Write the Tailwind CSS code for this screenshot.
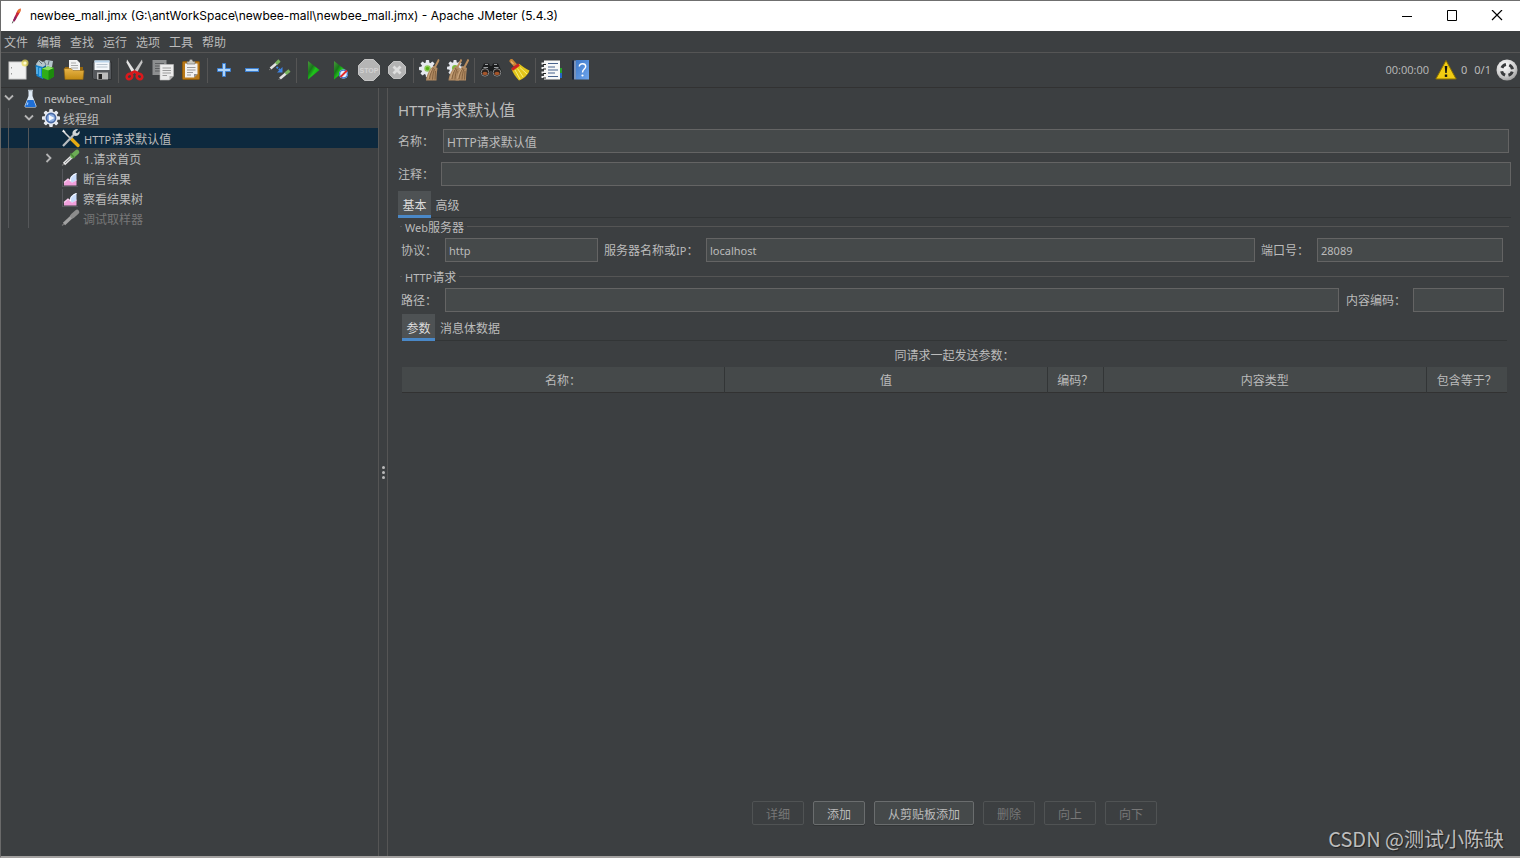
<!DOCTYPE html>
<html lang="zh-CN">
<head>
<meta charset="utf-8">
<title>newbee_mall.jmx - Apache JMeter (5.4.3)</title>
<script src="https://cdn.jsdelivr.net/npm/@tailwindcss/browser@4"></script>
</head>
<body class="relative flex h-screen flex-col overflow-hidden border-t border-b-2 border-l border-t-[#6f6f6f] border-b-[#a3a1a0] border-l-[#6a6a6a] bg-[#3c3f41] font-['Noto_Sans','Noto_Sans_CJK_SC',sans-serif] text-xs text-[#bbbbbb]">

<svg class="absolute size-0" aria-hidden="true">
  <defs>
    <linearGradient id="play" x1="0" y1="0" x2="1" y2="1"><stop offset="0" stop-color="#4a9a3c"/><stop offset=".35" stop-color="#18761a"/><stop offset=".55" stop-color="#1fc41b"/><stop offset="1" stop-color="#0c8a0c"/></linearGradient>
    <linearGradient id="gold" x1="0" y1="0" x2="0" y2="1"><stop offset="0" stop-color="#e8b54a"/><stop offset="1" stop-color="#c28a12"/></linearGradient>
    <linearGradient id="book" x1="0" y1="0" x2="1" y2="1"><stop offset="0" stop-color="#3d78c8"/><stop offset="1" stop-color="#6fa6ee"/></linearGradient>
    <radialGradient id="ball" cx=".4" cy=".3" r=".8"><stop offset="0" stop-color="#ffffff"/><stop offset=".6" stop-color="#cfcfcf"/><stop offset="1" stop-color="#8f8f8f"/></radialGradient>
    <symbol id="gear" viewBox="0 0 20 20">
      <g fill="#e6e9ef"><rect x="8" y="0" width="4" height="20" rx="1"/><rect x="8" y="0" width="4" height="20" rx="1" transform="rotate(45 10 10)"/><rect x="8" y="0" width="4" height="20" rx="1" transform="rotate(90 10 10)"/><rect x="8" y="0" width="4" height="20" rx="1" transform="rotate(135 10 10)"/><circle cx="10" cy="10" r="7.5"/></g>
    </symbol>
    <symbol id="broom" viewBox="0 0 14 22">
      <path d="M13.500 0.500L9 9" stroke="#b98d5e" stroke-width="2"/>
      <path d="M8 7L12 9C11.300 14 11 18 11 21.500H.5C1 16 4 10 8 7Z" fill="#b08a62"/>
      <path d="M4 20C4.500 16 6 12 8 9M7 20.500C7.200 16 8 13 9 10M9.500 20.500L10 12" stroke="#71502f" stroke-width=".7" fill="none"/>
      <path d="M2.500 19.500C3.500 15 5 12 6.500 10" stroke="#d3b088" stroke-width=".8" fill="none"/>
    </symbol>
    <symbol id="chart" viewBox="0 0 20 20">
      <path d="M1.500 1V19M1 18.500H17" stroke="#55575c" fill="none"/>
      <path d="M3 14.500L7 11L11 14L15.500 12V17.500H3Z" fill="#f0a0dc"/>
      <path d="M3 14.500L7 11L11 14L15.500 12" stroke="#fbd3f2" stroke-width="1.200" fill="none"/>
      <path d="M9 13C8.500 9 11 6.500 15.500 5V12L11.500 14.500Z" fill="#c9dcfb"/>
      <path d="M9.500 13C9 9.500 11.500 7 15.500 5.500" stroke="#fff" fill="none"/>
    </symbol>
  </defs>
</svg>

<!-- Title bar -->
<header class="flex h-[30px] shrink-0 items-center bg-white text-black">
  <svg class="ml-[9px] h-4 w-3" viewBox="0 0 12 16"><path d="M10.500 0.500C8 1 6.500 4 5.500 7L3 12.500L4.500 13.500L7.500 8.500C9.500 5.500 11 3 10.500 0.500Z" fill="#c8243a"/><path d="M10.500 0.500C9 1 7.500 2.500 7 4.500L9.800 4.800C10.500 3.500 10.900 2 10.500 0.500Z" fill="#e8792a"/><path d="M5.500 7L3 12.500L4.500 13.500L6.500 10Z" fill="#8c2263"/><path d="M3.300 13L2.300 15.300" stroke="#555"/></svg>
  <h1 class="ml-2 flex-1 font-['Inter',sans-serif] text-xs whitespace-nowrap">newbee_mall.jmx (G:\antWorkSpace\newbee-mall\newbee_mall.jmx) - Apache JMeter (5.4.3)</h1>
  <button aria-label="最小化" class="flex h-full w-[45px] items-center justify-center"><svg class="h-3 w-3" viewBox="0 0 12 12"><path d="M1 6.500H11" stroke="#000"/></svg></button>
  <button aria-label="最大化" class="flex h-full w-[45px] items-center justify-center"><svg class="h-3 w-3" viewBox="0 0 12 12"><path d="M1.500 .5H10.500V10.500H1.500Z" stroke="#000" fill="none"/></svg></button>
  <button aria-label="关闭" class="flex h-full w-[46px] items-center justify-center"><svg class="h-3 w-3" viewBox="0 0 12 12"><path d="M1 0L11 10M11 0L1 10" stroke="#000" stroke-width="1.200"/></svg></button>
</header>

<!-- Menu bar -->
<nav class="flex h-[22px] shrink-0 items-center gap-[9px] border-b border-[#555555] pt-[2px] pl-[3px]" aria-label="菜单">
  <button>文件</button><button>编辑</button><button>查找</button><button>运行</button><button>选项</button><button>工具</button><button>帮助</button>
</nav>

<!-- Toolbar -->
<div role="toolbar" aria-label="工具栏" class="flex h-[35px] shrink-0 items-center border-b border-[#323232] pl-[3px] *:shrink-0">
  <button aria-label="新建" class="flex w-7 justify-center"><svg class="size-[22px]" viewBox="0 0 22 22"><rect x="2" y="3" width="17" height="17" fill="#f1f1f1" stroke="#cfcfcf"/><path d="M4.500 8V9.500M4.500 14V15.500" stroke="#999"/><circle cx="18" cy="4" r="3.500" fill="#e9dc5a" opacity=".75"/><circle cx="18" cy="4" r="1.600" fill="#fffbd0"/></svg></button>
  <button aria-label="模板" class="flex w-7 justify-center"><svg class="size-[22px]" viewBox="0 0 22 22"><path d="M1 5L4 1L8 3L11 1L18 2L17 8H2Z" fill="#b6c6cc"/><path d="M4 2L7 5M9 2L11 6M14 2L13 6" stroke="#66757c"/><path d="M.5 6L8 8V20L1.500 17Z" fill="#1583cd"/><path d="M8 8L11 6V18L8 20Z" fill="#0b5a96"/><path d="M2 8V15M5 9V17" stroke="#72c4f5" stroke-width="1.300"/><path d="M7 9.500L13 7.500L19 9V17.500L13 21L7 18.500Z" fill="#2fae18"/><path d="M7 9.500L13 7.500L19 9L13.500 11.500Z" fill="#8be05d"/><path d="M13.500 11.500L19 9V17.500L13.500 21Z" fill="#1c8a0c"/></svg></button>
  <button aria-label="打开" class="flex w-7 justify-center"><svg class="size-[22px]" viewBox="0 0 22 22"><path d="M2 8H20V20H2Z" fill="#94660d"/><path d="M6 1H14L17 4V13H6Z" fill="#f2f2f2"/><path d="M8 4H13M8 6.500H15M8 9H15" stroke="#aaa"/><path d="M1 9.500H8L10 11.500H21L20 20.500H2Z" fill="url(#gold)" stroke="#8e6310" stroke-width=".6"/></svg></button>
  <button aria-label="保存" class="flex w-7 justify-center"><svg class="size-[22px]" viewBox="0 0 22 22"><path d="M1.500 3H20.500V20.500H3L1.500 19Z" fill="#55585c" stroke="#303234"/><path d="M3.500 1.500H18.500V11H3.500Z" fill="#f5f8fb"/><path d="M3.500 1.500H18.500V3.500H3.500Z" fill="#bcd6ec"/><path d="M5.500 5.500H16.500M5.500 8H16.500" stroke="#b9c4ce"/><path d="M6 13.500H17V20.500H6Z" fill="#bcbcbc"/><path d="M7.500 15H11V20H7.500Z" fill="#222"/></svg></button>
  <div class="mx-[2px] h-[25px] w-px bg-[#555555]"></div>
  <button aria-label="剪切" class="flex w-7 justify-center"><svg class="size-[22px]" viewBox="0 0 22 22"><path d="M3 0.500L12 13.500L8.500 14.500L2.500 3.500Z" fill="#e4e4e4"/><path d="M18 0.500L9 13.500L12.500 14.500L18.500 3.500Z" fill="#c4c4c4"/><g fill="none" stroke="#d9191c" stroke-width="2.600"><ellipse cx="5.500" cy="17.500" rx="3" ry="2.500" transform="rotate(-40 5.500 17.500)"/><ellipse cx="15.500" cy="17.500" rx="3" ry="2.500" transform="rotate(40 15.500 17.500)"/><path d="M6.500 14.500L10.500 12.500L14.500 14.500"/></g></svg></button>
  <button aria-label="复制" class="flex w-7 justify-center"><svg class="size-[22px]" viewBox="0 0 22 22"><path d="M0.500 1H14.500V16H0.500Z" fill="#8d8f90"/><path d="M3 4.500H12M3 7H8M3 9.500H8M3 12H8" stroke="#5d5f61"/><path d="M8 5.500H21.500V17L17.500 21H8Z" fill="#ececec" stroke="#bdbdbd" stroke-width=".6"/><path d="M10.500 9H19M10.500 11.500H19M10.500 14H19M10.500 16.500H15" stroke="#9c9c9c"/><path d="M21.500 17H17.500V21Z" fill="#b0b0b0"/></svg></button>
  <button aria-label="粘贴" class="flex w-7 justify-center"><svg class="size-[22px]" viewBox="0 0 22 22"><rect x="2.500" y="2.500" width="17" height="18" rx="1" fill="#b87817" stroke="#8b5a0e"/><path d="M5 4.500H17.500V15L14 18.500H5Z" fill="#f1f1f1"/><path d="M7 8.500H15.500M7 11H15.500M7 13.500H13M7 16H11" stroke="#999"/><path d="M17.500 15H14V18.500Z" fill="#8e8e8e"/><path d="M7 5V2.500H9L10 0.500H12L13 2.500H15V5Z" fill="#c9c9c1" stroke="#666" stroke-width=".6"/></svg></button>
  <div class="mx-[2px] h-[25px] w-px bg-[#555555]"></div>
  <button aria-label="展开" class="flex w-7 justify-center"><svg class="size-[22px]" viewBox="0 0 22 22"><path d="M9.500 4.500H12.500V9.500H17.500V12.500H12.500V17.500H9.500V12.500H4.500V9.500H9.500Z" fill="#aed3f7" stroke="#3c7fd0"/></svg></button>
  <button aria-label="收起" class="flex w-7 justify-center"><svg class="size-[22px]" viewBox="0 0 22 22"><rect x="4.500" y="9.500" width="13" height="3" fill="#aed3f7" stroke="#3c7fd0"/></svg></button>
  <button aria-label="切换" class="flex w-7 justify-center"><svg class="size-[22px]" viewBox="0 0 22 22"><path d="M1.500 9.500L8 4" stroke="#e2e2e2" stroke-width="2.600"/><path d="M7 4.800L10.500 1.500" stroke="#78b45e" stroke-width="3.200"/><path d="M0 11L2 9.500M9.500 21L11.500 19" stroke="#777"/><path d="M11 19.500L17.500 14" stroke="#e2e2e2" stroke-width="2.600"/><path d="M16.500 14.800L20.500 11.500" stroke="#78b45e" stroke-width="3.200"/><path d="M7.500 8L11 11" stroke="#3e84e4" stroke-width="1.800" stroke-dasharray="2 1"/><path d="M13.500 8V13.500H8Z" fill="#3e84e4"/></svg></button>
  <div class="mx-[2px] h-[25px] w-px bg-[#555555]"></div>
  <button aria-label="启动" class="flex w-7 justify-center"><svg class="size-[22px]" viewBox="0 0 22 22"><path d="M6 2L17.500 11L6 20.500Z" fill="url(#play)"/></svg></button>
  <button aria-label="不停顿开始" class="flex w-7 justify-center"><svg class="size-[22px]" viewBox="0 0 22 22"><path d="M4 2L15.500 11L4 20.500Z" fill="url(#play)"/><circle cx="13.500" cy="15" r="4.500" fill="#e8eefb"/><circle cx="13.500" cy="15" r="3.900" fill="none" stroke="#3c78cf" stroke-width="1.300"/><path d="M10.500 18L17 11.500" stroke="#e22a2a" stroke-width="1.800"/></svg></button>
  <button aria-label="停止" class="flex w-7 justify-center"><svg class="size-[22px]" viewBox="0 0 22 22"><path d="M6.500 0.500H15.500L21.500 6.500V15.500L15.500 21.500H6.500L0.500 15.500V6.500Z" fill="#b5b5b5" stroke="#c4c4c4"/><text x="11" y="14" text-anchor="middle" font-family="Liberation Sans" font-weight="bold" font-size="7" fill="#d2d2d2">STOP</text></svg></button>
  <button aria-label="关闭线程" class="flex w-7 justify-center"><svg class="size-[22px]" viewBox="0 0 22 22"><path d="M7.500 2.500H14.500L19.500 7.500V14.500L14.500 19.500H7.500L2.500 14.500V7.500Z" fill="#b3b3b3" stroke="#c2c2c2"/><path d="M7.500 7.500L14.500 14.500M14.500 7.500L7.500 14.500" stroke="#dedede" stroke-width="2.800"/></svg></button>
  <div class="mx-[2px] h-[25px] w-px bg-[#555555]"></div>
  <button aria-label="清除" class="flex w-7 justify-center"><svg class="size-[22px]" viewBox="0 0 22 22"><use href="#gear" x="0" y="1" width="17" height="17"/><circle cx="8.500" cy="9.500" r="3.200" fill="#8fc95a"/><circle cx="8.500" cy="9.500" r="1.700" fill="#55b012"/><use href="#broom" x="6.500" y="0" width="14" height="22"/></svg></button>
  <button aria-label="清除全部" class="flex w-7 justify-center"><svg class="size-[22px]" viewBox="0 0 22 22"><use href="#gear" x="0" y="1" width="16" height="16"/><circle cx="8" cy="9" r="3" fill="#7cbb3d"/><use href="#broom" x="1" y="0" width="14" height="22"/><use href="#broom" x="8" y="0" width="14" height="22"/></svg></button>
  <div class="mx-[2px] h-[25px] w-px bg-[#555555]"></div>
  <button aria-label="搜索" class="flex w-7 justify-center"><svg class="size-[22px]" viewBox="0 0 22 22"><path d="M4 4.500H9L10 7H12L13 4.500H18L21.500 12C22 19 14 19 13 15L12 12H10L9 15C8 19 0 19 .5 12Z" fill="#1b1d1e"/><path d="M5 5.500H8M14 5.500H17M3.500 8.500H8M14 8.500H18.500" stroke="#9a9da0" stroke-width="1.200"/><circle cx="5" cy="13.500" r="3.800" fill="#2a211d" stroke="#85888a"/><circle cx="17" cy="13.500" r="3.800" fill="#2a211d" stroke="#85888a"/><ellipse cx="5" cy="14.500" rx="2.500" ry="1.800" fill="#a4552b"/><ellipse cx="17" cy="14.500" rx="2.500" ry="1.800" fill="#a4552b"/></svg></button>
  <button aria-label="重置搜索" class="flex w-7 justify-center"><svg class="size-[22px]" viewBox="0 0 22 22"><path d="M3.500 2L8 7" stroke="#c88434" stroke-width="4" stroke-linecap="round"/><path d="M3 2.500L5.500 5" stroke="#e6b36b" stroke-width="1.200"/><path d="M3.500 10L11.500 5C15 8 18 10 21.500 11.500C20 16 16 19.500 11 21.500C7.500 18 5 14 3.500 10Z" fill="#e2c51b"/><path d="M7 11L12 20M9.500 9.500L15 18M12 8.500L19 15" stroke="#f7ee79" fill="none"/><path d="M4 10.500L11 5.500" stroke="#cc2323" stroke-width="2.800"/></svg></button>
  <div class="mx-[2px] h-[25px] w-px bg-[#555555]"></div>
  <button aria-label="函数助手" class="flex w-7 justify-center"><svg class="size-[22px]" viewBox="0 0 22 22"><path d="M18 9H21V14H18Z" fill="#26a02a"/><path d="M18 14H21V19H18Z" fill="#2466c4"/><path d="M3 1.500H19V20.500H3Z" fill="#f7f7f7"/><path d="M7 4.500H17M7 8H14M7 11H17M7 14H14M7 17.500H17" stroke="#49628c" stroke-width="1.200"/><path d="M.5 4.500H5M.5 9H5M.5 13.500H5M.5 18H5" stroke="#f0f0f0" stroke-width="2"/><path d="M2 5.500H5M2 10H5M2 14.500H5M2 19H5" stroke="#222"/></svg></button>
  <button aria-label="帮助" class="flex w-7 justify-center"><svg class="size-[22px]" viewBox="0 0 22 22"><path d="M3 1.500H6V20.500H3Z" fill="#17243d"/><path d="M5 1.500H7V20.500H5Z" fill="#7a92b8"/><path d="M7 1H20V20.500H7Z" fill="url(#book)"/><path d="M10.300 7.500C10.300 3.800 16.700 3.800 16.700 7.500C16.700 10 13.500 10.200 13.500 13.500" fill="none" stroke="#fff" stroke-width="1.400"/><circle cx="13.500" cy="16.500" r="1.100" fill="#fff"/></svg></button>

  <div class="ml-auto flex items-center pr-[2px]">
    <span class="pt-px font-['Open_Sans','Noto_Sans_CJK_SC',sans-serif] text-[11px]">00:00:00</span>
    <button aria-label="警告" class="ml-[6px]"><svg class="size-[22px]" viewBox="0 0 22 22"><path d="M11 1.500L21.200 20H.8Z" fill="#f2cc12" stroke="#8b7000" stroke-linejoin="round"/><path d="M9.700 7H12.300L11.700 14H10.300Z" fill="#111"/><rect x="9.800" y="15.500" width="2.400" height="2.400" fill="#111"/></svg></button>
    <span class="ml-1 pt-px text-[11px]">0</span>
    <span class="ml-[7px] pt-px text-[11px]">0/1</span>
    <svg class="ml-[5px] size-[22px]" viewBox="0 0 22 22"><circle cx="11" cy="11" r="10.500" fill="url(#ball)"/><circle cx="11" cy="11" r="5.500" fill="none" stroke="#393b3d" stroke-width="3" stroke-dasharray="5.200 3.440" stroke-dashoffset="-1.720"/></svg>
  </div>
</div>

<div class="flex min-h-0 flex-1">
  <!-- Test plan tree -->
  <aside class="w-[377px] shrink-0">
    <ul role="tree" class="*:flex *:h-5 *:items-center *:whitespace-nowrap">
      <li role="treeitem" aria-expanded="true">
        <svg class="ml-[3px] h-3 w-[10px]" viewBox="0 0 10 12"><path d="M1 3.500L5 7.500L9 3.500" stroke="#b4b4b4" stroke-width="1.800" fill="none"/></svg>
        <svg class="ml-[6px] size-5" viewBox="0 0 20 20"><path d="M8.500 2.500H12.500V8L16.500 18C16.500 19.500 15.500 19.500 14.500 19.500H6.500C5.500 19.500 4.500 19.500 4.500 18L8.500 8Z" fill="#dde9f5"/><path d="M7.500 12H13.500L15.800 18C15.800 19 15.500 19 14.500 19H6.500C5.500 19 5.200 19 5.200 18Z" fill="#1f6fd6"/><path d="M8 14.500L7 17" stroke="#9cc8ff" stroke-width="1.200"/><path d="M8 2.500H13" stroke="#b7c1cb" stroke-width="1.500"/></svg>
        <span class="ml-1 pt-[2px] text-[11px]">newbee_mall</span>
      </li>
      <li role="treeitem" aria-expanded="true">
        <i class="ml-[7px] h-5 w-[16px] border-l border-[#555759]"></i>
        <svg class="h-3 w-[10px]" viewBox="0 0 10 12"><path d="M1 3.500L5 7.500L9 3.500" stroke="#b4b4b4" stroke-width="1.800" fill="none"/></svg>
        <svg class="ml-[7px] size-5" viewBox="0 0 20 20"><use href="#gear" x="1" y="1" width="18" height="18"/><circle cx="10" cy="10" r="4.600" fill="#8fb0e4" stroke="#4b6ba5" stroke-width="1.600"/><path d="M8 7L13.500 10L8 13Z" fill="#f4f8ff"/></svg>
        <span class="ml-[2px] pt-[3px]">线程组</span>
      </li>
      <li role="treeitem" aria-selected="true" class="bg-[#0d293e]">
        <i class="ml-[7px] h-5 w-5 border-l border-[#555759]"></i><i class="h-5 w-[33px] border-l border-[#555759]"></i>
        <svg class="size-5" viewBox="0 0 20 20"><path d="M2 3L10 11" stroke="#dadada" stroke-width="1.600"/><path d="M1 3.500L2.500 1.500L5 4.500Z" fill="#eee"/><path d="M10 10.500L17 17.500" stroke="#e8aa12" stroke-width="3.400" stroke-linecap="round"/><path d="M2 18L13 6.500" stroke="#b9bcbf" stroke-width="2.200"/><path d="M17 1.500L14.500 4L16 5.500L18.500 3C19.500 6 16.500 9 13 7.500L11.500 6C11 3 14 0.500 17 1.500Z" fill="#d3d6d8"/></svg>
        <span class="ml-[3px] pt-[3px]"><span class="text-[11px]">HTTP</span>请求默认值</span>
      </li>
      <li role="treeitem" aria-expanded="false">
        <i class="ml-[7px] h-5 w-5 border-l border-[#555759]"></i><i class="h-5 w-[15px] border-l border-[#555759]"></i>
        <svg class="h-3 w-[10px]" viewBox="0 0 10 12"><path d="M3.500 2L7.500 6L3.500 10" stroke="#b4b4b4" stroke-width="1.800" fill="none"/></svg>
        <svg class="ml-2 size-5" viewBox="0 0 20 20"><path d="M1 17.500L3.500 15.500" stroke="#777" stroke-width="1.200"/><path d="M3 16L11 8.500" stroke="#e6e6e6" stroke-width="3.200"/><path d="M4 15L9.500 10" stroke="#85878a" stroke-width="1"/><path d="M11.500 8L16 4" stroke="#6cad55" stroke-width="4.600" stroke-linecap="round"/><path d="M9.500 5.500L13.500 10" stroke="#4c8a3a" stroke-width="1.500"/></svg>
        <span class="ml-[3px] pt-[3px]"><span class="text-[11px]">1.</span>请求首页</span>
      </li>
      <li role="treeitem">
        <i class="ml-[7px] h-5 w-5 border-l border-[#555759]"></i><i class="h-5 w-[33px] border-l border-[#555759]"></i>
        <svg class="size-5" viewBox="0 0 20 20"><use href="#chart"/></svg>
        <span class="ml-[2px] pt-[3px]">断言结果</span>
      </li>
      <li role="treeitem">
        <i class="ml-[7px] h-5 w-5 border-l border-[#555759]"></i><i class="h-5 w-[33px] border-l border-[#555759]"></i>
        <svg class="size-5" viewBox="0 0 20 20"><use href="#chart"/></svg>
        <span class="ml-[2px] pt-[3px]">察看结果树</span>
      </li>
      <li role="treeitem" aria-disabled="true" class="text-[#777777]">
        <i class="ml-[7px] h-5 w-5 border-l border-[#555759]"></i><i class="h-5 w-[33px] border-l border-[#555759]"></i>
        <svg class="size-5" viewBox="0 0 20 20"><path d="M1 17.500L3.500 15.500" stroke="#777" stroke-width="1.200"/><path d="M3 16L11 8.500" stroke="#a2a2a2" stroke-width="3.200"/><path d="M11.500 8L16 4" stroke="#8c8c8c" stroke-width="4.600" stroke-linecap="round"/></svg>
        <span class="ml-[2px] pt-[3px]">调试取样器</span>
      </li>
    </ul>
  </aside>

  <!-- Split divider -->
  <div role="separator" class="flex w-[10px] shrink-0 flex-col items-center justify-center gap-[2px] border-x border-[#555555]">
    <i class="size-[3px] rounded-full bg-[#b9b9b9]"></i><i class="size-[3px] rounded-full bg-[#b9b9b9]"></i><i class="size-[3px] rounded-full bg-[#b9b9b9]"></i>
  </div>

  <!-- Element editor -->
  <main class="flex min-w-0 flex-1 flex-col pr-[9px] pl-[10px]">
    <h2 class="mt-[10px] text-base leading-6"><span class="text-[15px]">HTTP</span>请求默认值</h2>
    <div class="mt-[7px] flex items-center pr-[2px]">
      <label for="name" class="w-[45px] shrink-0 pt-[2px]">名称：</label>
      <input id="name" value="HTTP请求默认值" class="h-6 min-w-0 flex-1 border border-[#646464] bg-[#45494a] px-[3px] pt-px outline-none">
    </div>
    <div class="mt-[9px] flex items-center">
      <label for="comment" class="w-[43px] shrink-0 pt-[2px]">注释：</label>
      <input id="comment" class="h-6 min-w-0 flex-1 border border-[#646464] bg-[#45494a] px-[3px] outline-none">
    </div>
    <div role="tablist" class="mt-[5px] flex h-[27px] border-b border-[#323536]">
      <button role="tab" aria-selected="true" class="-mb-px w-[33px] border-b-3 border-[#4a88c7] bg-[#4e5254] pt-[5px] text-[#dddddd]">基本</button>
      <button role="tab" class="w-[33px] pt-[3px]">高级</button>
    </div>

    <section class="mr-[2px]">
      <div class="flex h-[17px] items-center gap-[3px]">
        <i class="ml-[2px] h-px w-[2px] bg-[#555555]"></i><h3 class="pt-[2px]"><span class="text-[11px]">Web</span>服务器</h3><i class="h-px flex-1 bg-[#555555]"></i>
      </div>
      <div class="mt-[3px] flex items-center pr-[6px] pl-[3px]">
        <label for="protocol" class="w-[44px] shrink-0 pt-[2px]">协议：</label>
        <input id="protocol" value="http" class="h-6 w-[153px] shrink-0 border border-[#646464] bg-[#45494a] px-[3px] pt-px text-[11px] outline-none">
        <label for="server" class="w-[108px] shrink-0 pt-[2px] pl-[6px]">服务器名称或<span class="text-[11px]">IP</span>：</label>
        <input id="server" value="localhost" class="h-6 min-w-0 flex-1 border border-[#646464] bg-[#45494a] px-[3px] pt-px text-[11px] outline-none">
        <label for="port" class="w-[62px] shrink-0 pt-[2px] pl-[6px]">端口号：</label>
        <input id="port" value="28089" class="h-6 w-[186px] shrink-0 border border-[#646464] bg-[#45494a] px-[3px] pt-px text-[11px] outline-none">
      </div>
    </section>

    <section class="mt-[6px] mr-[2px] flex min-h-0 flex-1 flex-col">
      <div class="flex h-[17px] items-center gap-[3px]">
        <i class="ml-[2px] h-px w-[2px] bg-[#555555]"></i><h3 class="pt-[2px]"><span class="text-[11px]">HTTP</span>请求</h3><i class="h-px flex-1 bg-[#555555]"></i>
      </div>
      <div class="mt-[3px] flex items-center pr-[5px] pl-[3px]">
        <label for="path" class="w-[44px] shrink-0 pt-[2px]">路径：</label>
        <input id="path" class="h-6 min-w-0 flex-1 border border-[#646464] bg-[#45494a] px-[3px] outline-none">
        <label for="encoding" class="w-[74px] shrink-0 pt-[2px] pl-[7px]">内容编码：</label>
        <input id="encoding" class="h-6 w-[91px] shrink-0 border border-[#646464] bg-[#45494a] px-[3px] outline-none">
      </div>
      <div class="mr-[2px] ml-1">
        <div role="tablist" class="mt-[2px] flex h-[27px] border-b border-[#323536]">
          <button role="tab" aria-selected="true" class="-mb-px w-[33px] border-b-3 border-[#4a88c7] bg-[#4e5254] pt-[5px] text-[#dddddd]">参数</button>
          <button role="tab" class="w-[70px] pt-[3px]">消息体数据</button>
        </div>
        <table class="w-full table-fixed border-collapse">
          <caption class="h-[26px] pt-px text-center leading-[28px]">同请求一起发送参数：</caption>
          <colgroup><col><col><col class="w-[56px]"><col><col class="w-[81px]"></colgroup>
          <thead>
            <tr class="h-[25px] border-b border-[#323232] bg-[#45494a] *:border-r *:border-[#323536] *:pt-[4px] *:font-normal">
              <th scope="col">名称：</th><th scope="col">值</th><th scope="col">编码？</th><th scope="col">内容类型</th><th scope="col" class="border-r-0!">包含等于？</th>
            </tr>
          </thead>
        </table>
      </div>
    </section>

    <div class="mb-[31px] flex justify-center gap-[9px] *:h-6 *:rounded-[2px] *:border *:px-[13px] *:pt-[3px]">
      <button disabled class="border-[#505354] text-[#777777]">详细</button>
      <button class="border-[#6a6d6e] bg-[#45494a] shadow-[0_1px_0_#323536]">添加</button>
      <button class="border-[#6a6d6e] bg-[#45494a] shadow-[0_1px_0_#323536]">从剪贴板添加</button>
      <button disabled class="border-[#505354] text-[#777777]">删除</button>
      <button disabled class="border-[#505354] text-[#777777]">向上</button>
      <button disabled class="border-[#505354] text-[#777777]">向下</button>
    </div>
  </main>
</div>

<div class="pointer-events-none absolute right-4 bottom-[3px] font-['Noto_Sans_CJK_SC',sans-serif] text-[20px] leading-7 text-[#bdbdbd] [text-shadow:1px_1px_1px_#222]">CSDN @测试小陈缺</div>
</body>
</html>
